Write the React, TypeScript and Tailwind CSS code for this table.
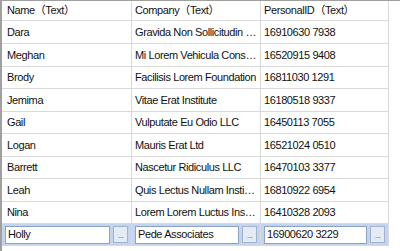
import React from "react";

const rows = [
  { name: "Dara", company: "Gravida Non Sollicitudin Institute", id: "16910630 7938", h: "h-[23px]" },
  { name: "Meghan", company: "Mi Lorem Vehicula Consulting", id: "16520915 9408", h: "h-[23px]" },
  { name: "Brody", company: "Facilisis Lorem Foundation", id: "16811030 1291", h: "h-[22px]" },
  { name: "Jemima", company: "Vitae Erat Institute", id: "16180518 9337", h: "h-[23px]" },
  { name: "Gail", company: "Vulputate Eu Odio LLC", id: "16450113 7055", h: "h-[22px]" },
  { name: "Logan", company: "Mauris Erat Ltd", id: "16521024 0510", h: "h-[23px]" },
  { name: "Barrett", company: "Nascetur Ridiculus LLC", id: "16470103 3377", h: "h-[22px]" },
  { name: "Leah", company: "Quis Lectus Nullam Institute", id: "16810922 6954", h: "h-[23px]" },
  { name: "Nina", company: "Lorem Lorem Luctus Institute", id: "16410328 2093", h: "h-[22px]" },
];

function EditCell({ value, w }: { value: string; w: string }) {
  return (
    <div className="flex items-center h-full px-[3px] gap-[3px] border-r border-[#d9d9d9]">
      <div className={`${w} h-[18px] bg-white border border-[#8aa4c8] px-[2px] flex items-center`}>
        {value}
      </div>
      <div className="w-[15px] h-[17px] border border-[#9fb3cf] bg-[#e4ebf5] flex items-end justify-center pb-[2px]">
        <span className="text-[8px] leading-none text-[#555]">...</span>
      </div>
    </div>
  );
}

export default function App() {
  return (
    <div
      className="w-[400px] h-[251px] bg-white overflow-hidden border-l-2 border-t border-l-[#a0a0a0] border-t-[#a0a0a0] text-[11px] tracking-[-0.4px] leading-none text-[#111]"
      style={{ fontFamily: '"Liberation Sans", "Noto Sans CJK JP", sans-serif' }}
    >
      <div className="w-[387px]">
        <div className="grid grid-cols-[130px_129px_128px] h-[20px] border-b border-[#d9d9d9]">
          <div className="px-[5px] flex items-center border-r border-[#d9d9d9]">Name（Text）</div>
          <div className="px-[3px] flex items-center border-r border-[#d9d9d9]">Company（Text）</div>
          <div className="px-[3px] flex items-center border-r border-[#d9d9d9]">PersonalID（Text）</div>
        </div>
        {rows.map((r) => (
          <div key={r.name} className={`grid grid-cols-[130px_129px_128px] ${r.h} border-b border-[#d9d9d9]`}>
            <div className="px-[5px] flex items-center border-r border-[#d9d9d9]">{r.name}</div>
            <div className="px-[3px] flex items-center border-r border-[#d9d9d9] min-w-0">
              <span className="truncate">{r.company}</span>
            </div>
            <div className="px-[3px] flex items-center border-r border-[#d9d9d9]">{r.id}</div>
          </div>
        ))}
        <div className="grid grid-cols-[130px_129px_128px] h-[22px] bg-[#c3d4ec] border-b border-[#d9d9d9]">
          <EditCell value="Holly" w="w-[108px]" />
          <EditCell value="Pede Associates" w="w-[106px]" />
          <EditCell value="16900620 3229" w="w-[105px]" />
        </div>
      </div>
    </div>
  );
}
